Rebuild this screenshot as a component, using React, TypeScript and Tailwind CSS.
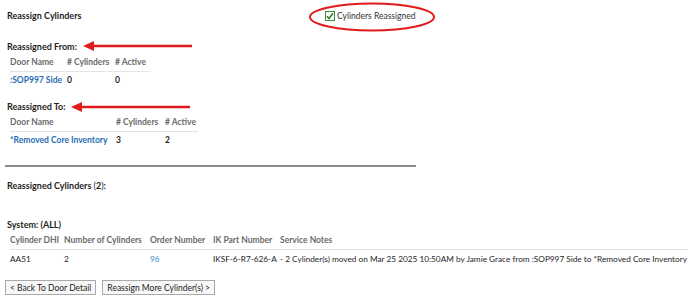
import React from 'react';

const font = { fontFamily: 'Lato, "Liberation Sans", sans-serif' };

const Arrow = ({ x1, x2, y }: { x1: number; x2: number; y: number }) => (
  <svg className="absolute pointer-events-none" style={{ left: x1, top: y - 6 }} width={x2 - x1} height={12}>
    <line x1={8} y1={6} x2={x2 - x1} y2={6} stroke="#e01b1b" strokeWidth={2.5} />
    <polygon points={`0,6 11,1 11,11`} fill="#e01b1b" />
  </svg>
);

const Check = () => (
  <svg width="10" height="10" viewBox="0 0 10 10" className="shrink-0">
    <rect x="0.5" y="0.5" width="9" height="9" fill="#fff" stroke="#3d8a3d" />
    <path d="M2 5.2 L4 7.5 L8 2.2" fill="none" stroke="#2f7d2f" strokeWidth="1.6" />
  </svg>
);

const th = 'text-left font-bold text-[8.5px] text-[#6b6b6b] pt-[3px] pb-[3px] pr-1 border-b border-[#e4e4e4] whitespace-nowrap overflow-visible';
const td = 'text-left pt-[2px] pb-[2px] pr-1 whitespace-nowrap overflow-visible';

export default function App() {
  return (
    <div className="relative w-[688px] h-[302px] bg-white text-[#1e1e1e] text-[9px] leading-[12px] overflow-hidden" style={font}>
      <div className="pt-[10px] pl-[7px]">
        <div className="flex items-center">
          <div className="font-bold w-[318px]">Reassign Cylinders</div>
          <div className="flex items-center gap-[2px] text-[#333] text-[8.5px]">
            <Check />
            <span>Cylinders Reassigned</span>
          </div>
        </div>

        <div className="font-bold mt-[19px]">Reassigned From:</div>
        <table className="border-collapse table-fixed w-[140px] ml-[3px]">
          <thead>
            <tr>
              <th className={`${th} w-[57px]`}>Door Name</th>
              <th className={`${th} w-[48px]`}># Cylinders</th>
              <th className={`${th} w-[35px]`}># Active</th>
            </tr>
          </thead>
          <tbody className="font-bold text-[8.5px]">
            <tr>
              <td className={`${td} text-[#1f6db3]`}>:SOP997 Side</td>
              <td className={td}>0</td>
              <td className={td}>0</td>
            </tr>
          </tbody>
        </table>

        <div className="font-bold mt-[13px]">Reassigned To:</div>
        <table className="border-collapse table-fixed w-[188px] ml-[3px]">
          <thead>
            <tr>
              <th className={`${th} w-[106px]`}>Door Name</th>
              <th className={`${th} w-[49px]`}># Cylinders</th>
              <th className={`${th} w-[33px]`}># Active</th>
            </tr>
          </thead>
          <tbody className="font-bold text-[8.5px]">
            <tr>
              <td className={`${td} text-[#1f6db3]`}>*Removed Core Inventory</td>
              <td className={td}>3</td>
              <td className={td}>2</td>
            </tr>
          </tbody>
        </table>

        <div className="mt-[17px] -ml-[2px] w-[411px] h-[2px] bg-[#8c8c8c]" />

        <div className="font-bold mt-[13px]">
          Reassigned Cylinders <span className="font-normal">(</span>2<span className="font-normal">)</span>:
        </div>

        <div className="font-bold mt-[27px]">System: (ALL)</div>
        <table className="border-collapse table-fixed ml-[3px] w-[678px]">
          <thead>
            <tr>
              <th className={`${th} w-[54px] pt-[2px]`}>Cylinder DHI</th>
              <th className={`${th} w-[86px] pt-[2px]`}>Number of Cylinders</th>
              <th className={`${th} w-[63px] pt-[2px]`}>Order Number</th>
              <th className={`${th} w-[67px] pt-[2px]`}>IK Part Number</th>
              <th className={`${th} pt-[2px]`}>Service Notes</th>
            </tr>
          </thead>
          <tbody className="text-[8.25px]">
            <tr>
              <td className={`${td} pt-[3px] pb-[3px]`}>AA51</td>
              <td className={`${td} pt-[3px] pb-[3px]`}>2</td>
              <td className={`${td} pt-[3px] pb-[3px] text-[#3d8ccc]`}>96</td>
              <td className={`${td} pt-[3px] pb-[3px]`}>IKSF-6-R7-626-A</td>
              <td className={`${td} pt-[3px] pb-[3px]`}>
                - 2 Cylinder(s) moved on Mar 25 2025 10:50AM by Jamie Grace from :SOP997 Side to *Removed Core Inventory
              </td>
            </tr>
          </tbody>
        </table>

        <div className="flex gap-[6px] mt-[12px] -ml-[2px]">
          <button className="h-[15px] px-[4px] border border-[#a9a9a9] bg-[#f7f7f7] text-[8.5px] leading-[12px] text-[#222]">
            &lt; Back To Door Detail
          </button>
          <button className="h-[15px] px-[4px] border border-[#a9a9a9] bg-[#f7f7f7] text-[8.5px] leading-[12px] text-[#222]">
            Reassign More Cylinder(s) &gt;
          </button>
        </div>
      </div>

      <svg className="absolute left-[308px] top-[1px] pointer-events-none" width="128" height="32">
        <ellipse cx="64" cy="16" rx="62" ry="13.5" fill="none" stroke="#e01b1b" strokeWidth="2" />
      </svg>
      <Arrow x1={83} x2={192} y={46} />
      <Arrow x1={71} x2={190} y={107} />
    </div>
  );
}
